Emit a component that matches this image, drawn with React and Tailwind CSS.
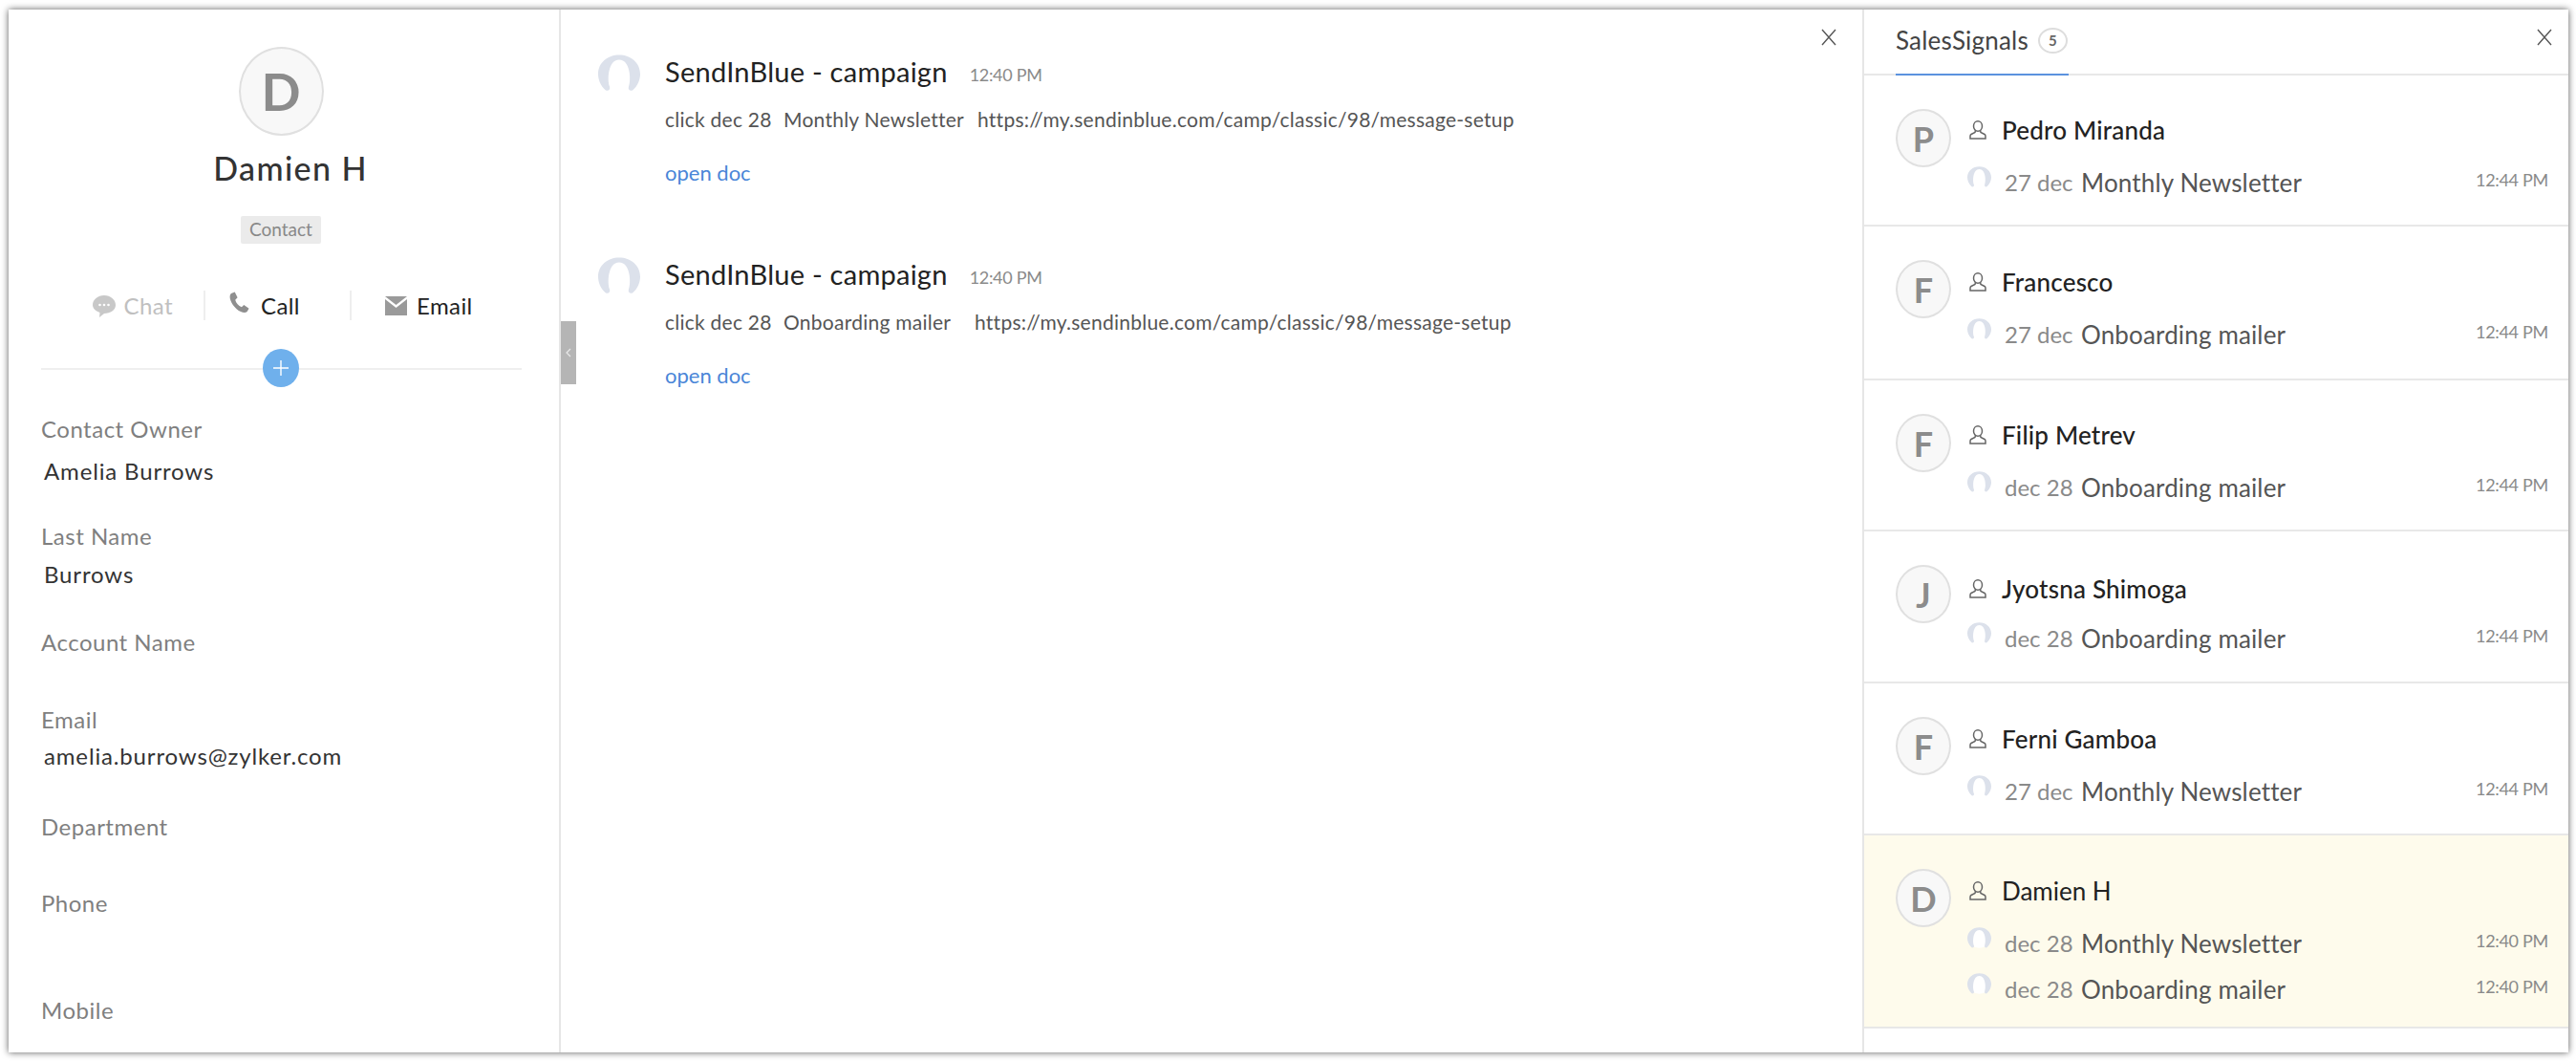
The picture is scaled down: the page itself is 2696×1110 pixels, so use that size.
const fields = [
  { label: 'Contact Owner', value: 'Amelia Burrows', box: 'h-[112px]', gap: 'mt-[14px]' },
  { label: 'Last Name', value: 'Burrows', box: 'h-[111px]', gap: 'mt-[10px]' },
  { label: 'Account Name', box: 'h-[81px]' },
  { label: 'Email', value: 'amelia.burrows@zylker.com', box: 'h-[112px]', gap: 'mt-[8px]' },
  { label: 'Department', box: 'h-[80px]' },
  { label: 'Phone', box: 'h-[112px]' },
  { label: 'Mobile', box: 'h-[40px]' },
];

const activity = [
  { subject: 'Monthly Newsletter', subjectClass: 'w-[203px]' },
  { subject: 'Onboarding mailer', subjectClass: 'w-[200px]' },
];

const signals = [
  { initial: 'P', name: 'Pedro Miranda', box: 'h-[158px]', nameGap: 'mt-[7px]', subGap: 'mt-[25px]', items: [{ date: '27 dec', title: 'Monthly Newsletter', time: '12:44 PM' }] },
  { initial: 'F', name: 'Francesco', box: 'h-[161px]', nameGap: 'mt-[8px]', subGap: 'mt-[25px]', items: [{ date: '27 dec', title: 'Onboarding mailer', time: '12:44 PM' }] },
  { initial: 'F', name: 'Filip Metrev', box: 'h-[158px]', nameGap: 'mt-[7px]', subGap: 'mt-[25px]', items: [{ date: 'dec 28', title: 'Onboarding mailer', time: '12:44 PM' }] },
  { initial: 'J', name: 'Jyotsna Shimoga', box: 'h-[159px]', nameGap: 'mt-[10px]', subGap: 'mt-[22px]', items: [{ date: 'dec 28', title: 'Onboarding mailer', time: '12:44 PM' }] },
  { initial: 'F', name: 'Ferni Gamboa', box: 'h-[159px]', nameGap: 'mt-[8px]', subGap: 'mt-[25px]', items: [{ date: '27 dec', title: 'Monthly Newsletter', time: '12:44 PM' }] },
  {
    initial: 'D',
    name: 'Damien H',
    box: 'h-[202px] bg-[#fefbec]',
    light: true,
    nameGap: 'mt-[8px]',
    subGap: 'mt-[25px]',
    items: [
      { date: 'dec 28', title: 'Monthly Newsletter', time: '12:40 PM' },
      { date: 'dec 28', title: 'Onboarding mailer', time: '12:40 PM' },
    ],
  },
];

const Silhouette = ({ className }) => (
  <svg viewBox="0 0 44 38" className={className}>
    <ellipse cx="22" cy="20" rx="20" ry="18" fill="#fff" />
    <path
      d="M8 37 C2 32 0 25 0 20 C0 8 10 0 22 0 C34 0 44 8 44 20 C44 25 42 32 36 37 C33 38 31 36 32 33 C34.5 27 34 5 22 5 C10 5 9.5 27 12 33 C13 36 11 38 8 37 Z"
      fill="#dce1eb"
    />
  </svg>
);

const CloseIcon = ({ className }) => (
  <svg viewBox="0 0 16 18" className={className} fill="none" stroke="#555" strokeWidth="1.4">
    <path d="M1 1 L15 17 M15 1 L1 17" />
  </svg>
);

const PersonIcon = () => (
  <svg viewBox="0 0 18 20" className="w-[18px] h-[20px] shrink-0" fill="none" stroke="#666" strokeWidth="1.5">
    <ellipse cx="9" cy="6" rx="4.5" ry="5.2" />
    <path d="M6.5 10.5 L6 12.5 L2 14.5 Q1 15 1 16.5 L1 19 L17 19 L17 16.5 Q17 15 16 14.5 L12 12.5 L11.5 10.5" />
  </svg>
);

const ChatIcon = () => (
  <svg viewBox="0 0 24 26" className="w-[24px] h-[26px]">
    <path d="M12 2 C18.5 2 24 6.5 24 12 C24 17.5 18.5 21 12 21 L7 25 L7.5 20 C3 18.5 0 15.5 0 12 C0 6.5 5.5 2 12 2 Z" fill="#c8c8c8" />
    <circle cx="7.5" cy="12" r="1.3" fill="#fff" />
    <circle cx="12" cy="12" r="1.3" fill="#fff" />
    <circle cx="16.5" cy="12" r="1.3" fill="#fff" />
  </svg>
);

const PhoneIcon = () => (
  <svg viewBox="0 0 22 24" className="w-[21px] h-[23px] mb-[6px]">
    <path
      d="M2 2 L6 0.5 L9 6.5 L6.5 9 C7.5 12.5 10 15.5 13.5 17 L16 14.5 L21.5 18.5 L19.5 22 C18 23.5 15.5 23.5 12.5 22 C6.5 19 2 13 0.8 7.5 C0.4 5.2 0.8 3.2 2 2 Z"
      fill="#8f8f8f"
    />
  </svg>
);

const MailIcon = () => (
  <svg viewBox="0 0 23 20" className="w-[23px] h-[20px]">
    <path d="M0 0 H23 L11.5 9 Z" fill="#9a9a9a" />
    <path d="M0 3 L11.5 12 L23 3 V20 H0 Z" fill="#9a9a9a" />
  </svg>
);

const Avatar = ({ initial, className, textClass }) => (
  <div className={`flex items-center justify-center rounded-[50%] border-2 border-[#e0e0e0] bg-[#f8f8f8] text-[#8c8c8c] shrink-0 ${className} ${textClass}`}>
    {initial}
  </div>
);

const App = () => {
  return (
    <div className="w-[2696px] h-[1110px] bg-white pt-[10px] pl-[9px] pr-[8px] pb-[9px] font-[Lato,sans-serif]">
      <div className="flex h-full bg-white overflow-hidden shadow-[0_0_7px_rgba(0,0,0,0.65)]">
        {/* Contact details */}
        <aside className="w-[578px] shrink-0 h-full border-r-2 border-[#e6e6e6] pt-[39px] flex flex-col">
          <div className="flex flex-col items-center pr-[6px]">
            <Avatar initial="D" className="w-[89px] h-[93px]" textClass="text-[54px] font-bold" />
            <h1 className="mt-[14px] ml-[20px] h-[40px] leading-[40px] text-[34px] font-medium text-[#333] tracking-[1.4px]">Damien H</h1>
            <span className="mt-[30px] h-[29px] w-[84px] flex items-center justify-center bg-[#ebebeb] rounded-[2px] text-[19px] text-[#888]">Contact</span>
          </div>

          <div className="mt-[49px] flex h-[31px] text-[24px] leading-[31px] tracking-[0.4px]">
            <div className="w-[206px] flex items-center justify-end gap-[9px] pr-[32px] border-r-2 border-[#eee] text-[#c0c0c0]">
              <ChatIcon />
              <span>Chat</span>
            </div>
            <div className="w-[153px] flex items-center pl-[25px] gap-[12px] border-r-2 border-[#eee] text-[#222]">
              <PhoneIcon />
              <span>Call</span>
            </div>
            <div className="flex items-center pl-[35px] gap-[10px] text-[#222]">
              <MailIcon />
              <span>Email</span>
            </div>
          </div>

          <div className="relative mt-[50px] ml-[34px] w-[503px] h-[2px] bg-[#efefef]">
            <div className="absolute left-[232px] top-[-20px] w-[38px] h-[40px] rounded-[50%] bg-[#6fb0ec] flex items-center justify-center">
              <svg viewBox="0 0 16 16" className="w-[16px] h-[16px]" stroke="#fff" strokeWidth="1.4">
                <path d="M8 0 V16 M0 8 H16" />
              </svg>
            </div>
          </div>

          <div className="mt-[47px] pl-[34px]">
            {fields.map((field) => (
              <div key={field.label} className={field.box}>
                <div className="h-[30px] leading-[30px] text-[24px] text-[#7f7f7f] tracking-[0.5px]">{field.label}</div>
                {field.value && (
                  <div className={`${field.gap} ml-[3px] h-[30px] leading-[30px] text-[24px] text-[#333] tracking-[0.85px]`}>
                    {field.value}
                  </div>
                )}
              </div>
            ))}
          </div>
        </aside>

        {/* Activity feed */}
        <main className="relative w-[1362px] shrink-0 h-full pt-[47px] pl-[40px]">
          <div className="absolute left-0 top-[326px] w-[16px] h-[66px] bg-[#b5b5b5] flex items-center justify-center">
            <svg viewBox="0 0 6 10" className="w-[6px] h-[10px]" fill="none" stroke="#e8e8e8" strokeWidth="1.2">
              <path d="M5 1 L1 5 L5 9" />
            </svg>
          </div>
          <CloseIcon className="absolute right-[27px] top-[20px] w-[16px] h-[18px]" />

          {activity.map((item) => (
            <div key={item.subject} className="flex h-[212px]">
              <Silhouette className="w-[44px] h-[39px] shrink-0 -ml-[1px]" />
              <div className="ml-[26px]">
                <div className="flex items-center h-[36px]">
                  <span className="text-[29px] text-[#222] tracking-[0.25px]">SendInBlue - campaign</span>
                  <span className="ml-[23px] mt-[6px] text-[18px] text-[#8a8a8a] tracking-[-0.3px]">12:40 PM</span>
                </div>
                <div className="mt-[17px] flex h-[30px] items-center text-[21px] text-[#555] tracking-[0.25px]">
                  <span className="w-[124px]">click dec 28</span>
                  <span className={item.subjectClass}>{item.subject}</span>
                  <span>https://my.sendinblue.com/camp/classic/98/message-setup</span>
                </div>
                <div className="mt-[26px] h-[30px] leading-[30px] text-[22px] text-[#4a86d8]">open doc</div>
              </div>
            </div>
          ))}
        </main>

        {/* Sales signals */}
        <section className="relative flex-1 h-full border-l-2 border-[#e6e6e6]">
          <CloseIcon className="absolute right-[17px] top-[20px] w-[16px] h-[18px]" />
          <header className="h-[69px] border-b-2 border-[#e8e8e8] pl-[33px]">
            <div className="flex items-center w-[181px] h-[69px] pb-[2px] border-b-2 border-[#5b92de]">
              <span className="text-[26px] text-[#444] tracking-[0.2px]">SalesSignals</span>
              <span className="ml-[10px] w-[31px] h-[27px] rounded-[50%] border-2 border-[#ddd] flex items-center justify-center text-[15px] font-bold text-[#666]">5</span>
            </div>
          </header>

          {signals.map((signal) => (
            <div key={signal.name} className={`${signal.box} border-b-2 border-[#e8e8e8] pt-[35px] pl-[33px] pr-[21px] flex`}>
              <Avatar initial={signal.initial} className="w-[58px] h-[61px]" textClass="text-[36px] font-bold" />
              <div className="ml-[17px] flex-1">
                <div className={`${signal.nameGap} h-[30px] flex items-center pl-[2px]`}>
                  <PersonIcon />
                  <span className={`ml-[16px] text-[26px] text-[#222] ${signal.light ? 'font-normal' : 'font-medium tracking-[0.2px]'}`}>{signal.name}</span>
                </div>
                {signal.items.map((item, index) => (
                  <div key={item.title} className={`flex items-center h-[30px] ${index === 0 ? signal.subGap : 'mt-[18px]'}`}>
                    <Silhouette className="w-[25px] h-[26px] mr-[14px] mb-[12px] shrink-0" />
                    <span className="w-[80px] text-[24px] text-[#8a8a8a]">{item.date}</span>
                    <span className="flex-1 text-[26px] text-[#555] tracking-[0.15px]">{item.title}</span>
                    <span className="mb-[6px] text-[18px] text-[#8a8a8a] tracking-[-0.3px]">{item.time}</span>
                  </div>
                ))}
              </div>
            </div>
          ))}
        </section>
      </div>
    </div>
  );
};

export default App;
